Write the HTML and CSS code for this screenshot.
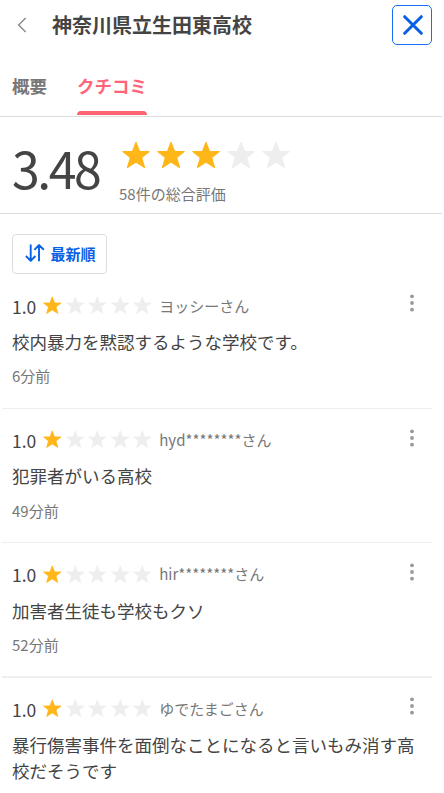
FILE: index.html
```
<!DOCTYPE html>
<html lang="ja">
<head>
<meta charset="utf-8">
<title>神奈川県立生田東高校</title>
<link rel="stylesheet" href="styles.css">
</head>
<body>
<svg class="defs" aria-hidden="true">
  <symbol id="star" viewBox="0 0 28 27"><path d="M14 .8 17.5 10H27.2L19.7 16.1 22.5 26 14 20.5 5.5 26 8.3 16.1.8 10H10.5Z" fill="currentColor" stroke="currentColor" stroke-width="1.1" stroke-linejoin="round"/></symbol>
  <symbol id="dots" viewBox="0 0 4 18"><circle cx="2" cy="2.3" r="1.9"/><circle cx="2" cy="9" r="1.9"/><circle cx="2" cy="15.7" r="1.9"/></symbol>
</svg>
<div class="page">
  <header class="header">
    <svg class="back" viewBox="0 0 10 16"><path d="M8.7 1 1.6 8l7.1 7"/></svg>
    <h1 class="title">神奈川県立生田東高校</h1>
    <button class="close" aria-label="閉じる"><svg viewBox="0 0 20 20"><path d="m1.7 1.7 16.6 16.6M18.3 1.7 1.7 18.3"/></svg></button>
  </header>
  <nav class="tabs">
    <a class="tab">概要</a>
    <a class="tab active">クチコミ</a>
  </nav>
  <section class="summary">
    <div class="score">3.48</div>
    <div class="overall">
      <div class="stars large"><svg class="on"><use href="#star"/></svg><svg class="on"><use href="#star"/></svg><svg class="on"><use href="#star"/></svg><svg><use href="#star"/></svg><svg><use href="#star"/></svg></div>
      <div class="count">58件の総合評価</div>
    </div>
  </section>
  <button class="sort"><svg viewBox="0 0 20 18"><path d="M5.7.6v16.2M.9 12l4.8 4.8L10.4 12M14 17.2V1M9.4 5.8 14 1.1l4.8 4.7"/></svg>最新順</button>
  <main class="reviews">
    <article class="review">
      <div class="meta"><span class="rate">1.0</span><div class="stars"><svg class="on"><use href="#star"/></svg><svg><use href="#star"/></svg><svg><use href="#star"/></svg><svg><use href="#star"/></svg><svg><use href="#star"/></svg></div><span class="name">ヨッシーさん</span><svg class="more"><use href="#dots"/></svg></div>
      <p class="text">校内暴力を黙認するような学校です。</p>
      <div class="time">6分前</div>
    </article>
    <article class="review">
      <div class="meta"><span class="rate">1.0</span><div class="stars"><svg class="on"><use href="#star"/></svg><svg><use href="#star"/></svg><svg><use href="#star"/></svg><svg><use href="#star"/></svg><svg><use href="#star"/></svg></div><span class="name">hyd********さん</span><svg class="more"><use href="#dots"/></svg></div>
      <p class="text">犯罪者がいる高校</p>
      <div class="time">49分前</div>
    </article>
    <article class="review thick">
      <div class="meta"><span class="rate">1.0</span><div class="stars"><svg class="on"><use href="#star"/></svg><svg><use href="#star"/></svg><svg><use href="#star"/></svg><svg><use href="#star"/></svg><svg><use href="#star"/></svg></div><span class="name">hir********さん</span><svg class="more"><use href="#dots"/></svg></div>
      <p class="text">加害者生徒も学校もクソ</p>
      <div class="time">52分前</div>
    </article>
    <article class="review">
      <div class="meta"><span class="rate">1.0</span><div class="stars"><svg class="on"><use href="#star"/></svg><svg><use href="#star"/></svg><svg><use href="#star"/></svg><svg><use href="#star"/></svg><svg><use href="#star"/></svg></div><span class="name">ゆでたまごさん</span><svg class="more"><use href="#dots"/></svg></div>
      <p class="text">暴行傷害事件を面倒なことになると言いもみ消す高校だそうです</p>
    </article>
  </main>
</div>
</body>
</html>
```
FILE: styles.css
```
* { box-sizing: border-box; }
html { height: 100%; overflow: hidden; }
body {
  margin: 0;
  height: 100%;
  overflow: hidden;
  background: #fcfcfc;
  color: #444;
  font-family: "Noto Sans CJK JP", sans-serif;
}
svg { display: block; flex: none; }
button { font-family: inherit; background: #fff; padding: 0; }
.defs { display: none; }
.page { width: 442px; height: 793px; overflow: hidden; background: #fff; }

.header { display: flex; align-items: center; height: 50px; padding: 0 10px 0 17px; }
.back { width: 10px; height: 16px; fill: none; stroke: #8c8c8c; stroke-width: 1.5; }
.title { margin: 0 auto 0 25px; font-size: 20px; font-weight: 700; line-height: 30px; }
.close {
  display: flex; align-items: center; justify-content: center;
  width: 40px; height: 40px;
  border: 1px solid #1670f5; border-radius: 5px;
}
.close svg { width: 20px; height: 20px; margin-left: 1px; fill: none; stroke: #0860e6; stroke-width: 3; stroke-linecap: round; }

.tabs { display: flex; gap: 30px; height: 67px; padding: 0 12px 1px; border-bottom: 1px solid #dcdcdc; }
.tab { padding-top: 23px; font-size: 17.5px; font-weight: 700; line-height: 26px; color: #777; }
.tab.active { position: relative; color: #ff6478; }
.tab.active::after {
  content: ""; position: absolute; left: 0; right: 0; bottom: 0;
  height: 4px; border-radius: 4px 4px 0 0; background: #ff6470;
}

.summary { display: flex; height: 97px; padding: 24px 12px 0; border-bottom: 1px solid #dcdcdc; }
.score { width: 107px; margin-top: -4px; font-size: 50px; line-height: 60px; letter-spacing: -2.5px; }
.stars { display: flex; gap: 4.1px; color: #eee; }
.stars svg { width: 18.5px; height: 18.5px; }
.stars .on { color: #ffb619; }
.stars.large { gap: 7px; padding-left: 3.2px; }
.stars.large svg { width: 28px; height: 28px; }
.count { margin-top: 14px; font-size: 15px; line-height: 22px; color: #777; }

.sort {
  display: flex; align-items: center;
  width: 95px; height: 40px; margin: 20px 0 0 12px; padding-left: 11.5px;
  border: 1px solid #ddd; border-radius: 4px;
  color: #0860e6; font-size: 15px; font-weight: 700; line-height: 22px;
}
.sort svg { width: 20px; height: 18px; margin: 0 6px 2px 0; fill: none; stroke: currentColor; stroke-width: 1.9; }

.reviews { margin: 0 10px 0 2px; padding-top: .8px; }
.review { height: 134.25px; padding: 18px 10px 0; border-bottom: 1px solid #eee; }
.review.thick { border-bottom-width: 2px; }
.meta { display: flex; align-items: center; height: 28px; }
.rate { width: 31px; font-size: 17.5px; line-height: 28px; }
.meta .stars { margin-bottom: 3px; }
.name { margin: 0 auto 2px 7.4px; font-size: 15px; line-height: 22px; color: #777; }
.more { width: 4px; height: 18px; margin: 0 8px 7px 0; fill: #999; }
.text { margin: 8.3px 0 0; font-size: 17.5px; line-height: 26.25px; }
.time { margin-top: 10px; font-size: 15px; line-height: 22px; color: #777; }
```
